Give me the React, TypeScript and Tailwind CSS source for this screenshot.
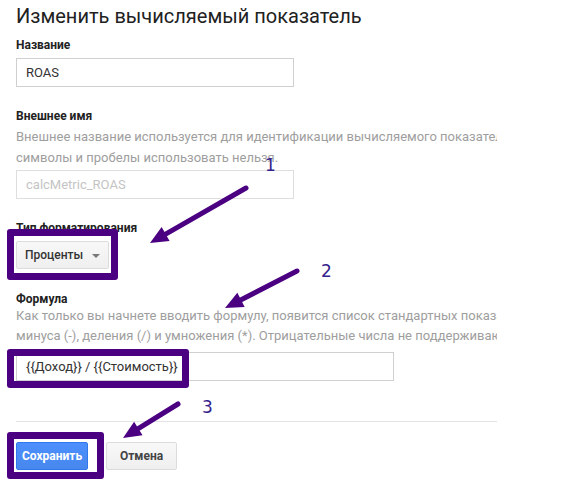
import React from "react";

function Arrow({ x1, y1, x2, y2 }: { x1: number; y1: number; x2: number; y2: number }) {
  const dx = x2 - x1;
  const dy = y2 - y1;
  const len = Math.sqrt(dx * dx + dy * dy);
  const ux = dx / len;
  const uy = dy / len;
  const headLen = 18;
  const headW = 8;
  const bx = x2 - ux * headLen;
  const by = y2 - uy * headLen;
  const px = -uy;
  const py = ux;
  const pts = `${x2},${y2} ${bx + px * headW},${by + py * headW} ${bx - px * headW},${by - py * headW}`;
  return (
    <g>
      <line x1={x1} y1={y1} x2={bx + ux * 2} y2={by + uy * 2} stroke="#4b0082" strokeWidth={5} strokeLinecap="round" />
      <polygon points={pts} fill="#4b0082" />
    </g>
  );
}

function Label({ children, className = "" }: { children: React.ReactNode; className?: string }) {
  return <div className={`text-[12px] leading-[16px] font-bold text-[#222] ${className}`}>{children}</div>;
}

export default function App() {
  return (
    <div className="relative w-[563px] h-[483px] overflow-hidden bg-white font-['Roboto',sans-serif]">
      <div className="w-[497px] pl-4 pt-[2px] overflow-hidden">
        <div className="text-[20px] leading-[28px] text-[#212121] whitespace-nowrap">Изменить вычисляемый показатель</div>

        <Label className="mt-[7px]">Название</Label>
        <div className="mt-[5px] w-[278px] h-[29px] border border-[#d0d0d0] flex items-center px-[9px] text-[13px] text-[#333]">ROAS</div>

        <Label className="mt-[21px]">Внешнее имя</Label>
        <div className="mt-[2px] text-[13px] leading-[21px] text-[#9e9e9e] whitespace-nowrap overflow-hidden">
          <div>Внешнее название используется для идентификации вычисляемого показателя в API. Допускаются только</div>
          <div>символы и пробелы использовать нельзя.</div>
        </div>
        <div className="mt-[2px] w-[278px] h-[29px] border border-[#dedede] flex items-center px-[9px] text-[13px] text-[#c4c4c4]">calcMetric_ROAS</div>

        <Label className="mt-[21px]">Тип форматирования</Label>
        <div className="mt-[5px] w-[93px] h-[28px] border border-[#dcdcdc] rounded-[2px] bg-gradient-to-b from-[#f8f8f8] to-[#efefef] flex items-center pl-[8px] pr-[8px] justify-between">
          <span className="text-[12px] font-medium text-[#333]">Проценты</span>
          <span className="w-0 h-0 border-l-[4px] border-r-[4px] border-t-[4px] border-l-transparent border-r-transparent border-t-[#777] mt-[1px]" />
        </div>

        <Label className="mt-[22px]">Формула</Label>
        <div className="mt-[-1px] text-[13px] leading-[20px] text-[#9e9e9e] whitespace-nowrap overflow-hidden">
          <div>Как только вы начнете вводить формулу, появится список стандартных показателей и операторов сложения,</div>
          <div>минуса (-), деления (/) и умножения (*). Отрицательные числа не поддерживаются.</div>
        </div>
        <div className="mt-[6px] w-[378px] h-[29px] border border-[#d0d0d0] flex items-center px-[9px] text-[13px] text-[#333]">{"{{Доход}} / {{Стоимость}}"}</div>

        <div className="mt-[40px] h-px bg-[#e3e3e3]" />

        <div className="mt-[20px] flex gap-[18px]">
          <div className="w-[72px] h-[28px] rounded-[2px] border border-[#3079ed] bg-gradient-to-b from-[#4d90fe] to-[#4787ed] flex items-center justify-center text-[12px] font-bold text-white">Сохранить</div>
          <div className="w-[71px] h-[28px] rounded-[2px] border border-[#dcdcdc] bg-gradient-to-b from-[#f8f8f8] to-[#efefef] flex items-center justify-center text-[12px] font-bold text-[#444]">Отмена</div>
        </div>
      </div>

      <div className="absolute left-[7px] top-[229px] w-[111px] h-[51px] border-[7px] border-[#4b0082] rounded-[3px]" />
      <div className="absolute left-[7px] top-[349px] w-[182px] h-[39px] border-[7px] border-[#4b0082] rounded-[3px]" />
      <div className="absolute left-[7px] top-[432px] w-[97px] h-[47px] border-[7px] border-[#4b0082] rounded-[3px]" />

      <div className="absolute left-[265px] top-[155px] text-[17px] leading-[20px] text-[#34228a] font-['DejaVu_Sans',sans-serif]">1</div>
      <div className="absolute left-[321px] top-[261px] text-[17px] leading-[20px] text-[#34228a] font-['DejaVu_Sans',sans-serif]">2</div>
      <div className="absolute left-[202px] top-[397px] text-[17px] leading-[20px] text-[#34228a] font-['DejaVu_Sans',sans-serif]">3</div>

      <svg className="absolute left-0 top-0" width={563} height={483}>
        <Arrow x1={246} y1={188} x2={150} y2={243} />
        <Arrow x1={297} y1={271} x2={225} y2={308} />
        <Arrow x1={178} y1={404} x2={123} y2={438} />
      </svg>
    </div>
  );
}
